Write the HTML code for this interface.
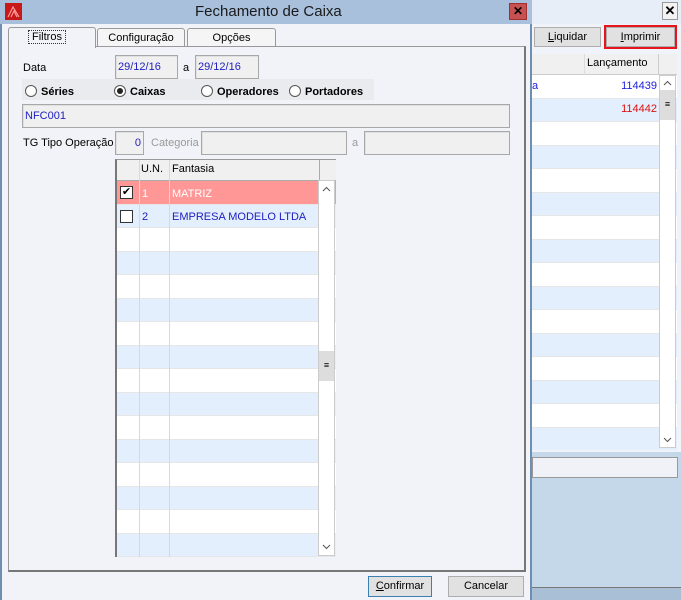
<!DOCTYPE html>
<html><head><meta charset="utf-8"><style>
*{box-sizing:border-box;margin:0;padding:0}
body{width:681px;height:600px;position:relative;overflow:hidden;font-family:"Liberation Sans",sans-serif;font-size:11px;background:#c4d8ea;color:#000}
.a{position:absolute}
.inp{position:absolute;background:#f0f0f0;border:1px solid #a8a8a8;box-shadow:inset 1px 1px 0 #e0e0e0;color:#2020c0;padding:3px 2px;font-size:11px}
.btn{position:absolute;background:#e1e1e1;border:1px solid #adadad;text-align:center;font-size:11px;line-height:18px}
.radio{display:inline-block;width:12px;height:12px;border:1px solid #555;border-radius:50%;background:#fff;vertical-align:-2px;margin-right:4px;position:relative}
.radio.on::after{content:"";position:absolute;left:2px;top:2px;width:6px;height:6px;border-radius:50%;background:#222}
.row{position:absolute;left:0;height:23.5px;border-bottom:1px solid #e6e6e6}
</style></head><body>
<!-- right window -->
<div class="a" style="left:532px;top:0;width:149px;height:24px;background:#e8eef8"></div>
<div class="a" style="left:662px;top:2px;width:16px;height:18px;background:#f3f3f3;border:1px solid #999;font-weight:bold;font-size:13px;text-align:center;line-height:16px">✕</div>
<div class="a" style="left:532px;top:24px;width:149px;height:428px;background:#f0f4fa"></div>
<div class="btn" style="left:534px;top:27px;width:67px;height:20px"><u>L</u>iquidar</div>
<div class="a" style="left:604px;top:25px;width:73px;height:24px;border:2px solid #e8141c"></div>
<div class="btn" style="left:606px;top:27px;width:69px;height:20px"><u>I</u>mprimir</div>
<div class="a" style="left:532px;top:54px;width:145px;height:396px;background:#fff;overflow:hidden">
 <div class="a" style="left:0;top:0;width:145px;height:21px;background:#f0f0f0;border-bottom:1px solid #ccc"></div>
 <div class="a" style="left:52px;top:0;width:1px;height:396px;background:#ddd"></div>
 <div class="a" style="left:55px;top:3px">Lançamento</div>
 <div class="a" style="left:126px;top:0;width:1px;height:21px;background:#ccc"></div>
 <div id="rr"></div>
</div>
<div class="a" style="left:659px;top:75px;width:17px;height:373px;background:#fff;border:1px solid #ccc">
 <svg class="a" style="left:3px;top:4px" width="9" height="6"><path d="M1 5L4.5 1.5L8 5" fill="none" stroke="#555"/></svg>
 <div class="a" style="left:0;top:14px;width:15px;height:30px;background:#ddd;text-align:center;line-height:28px;font-size:9px">≡</div>
 <svg class="a" style="left:3px;bottom:4px" width="9" height="6"><path d="M1 1L4.5 4.5L8 1" fill="none" stroke="#555"/></svg>
</div>
<div class="a" style="left:532px;top:457px;width:146px;height:21px;background:#f0f2f7;border:1px solid #999"></div>
<div class="a" style="left:532px;top:587px;width:149px;height:13px;background:#a9bfd6;border-top:1px solid #777"></div>
<!-- dialog -->
<div class="a" style="left:0;top:0;width:532px;height:600px;background:#f1f3f8;border-left:2px solid #6f8fb0;border-right:2px solid #6f8fb0"></div>
<div class="a" style="left:0;top:0;width:532px;height:24px;background:#a8c0dc"></div>
<div class="a" style="left:5px;top:3px;width:17px;height:17px;background:#c81818"><svg class="a" style="left:2px;top:2px" width="13" height="13"><path d="M1 12L6 2L12 12M4 12L7 6L10 12" fill="none" stroke="#ff9a9a" stroke-width="1.2"/></svg></div>
<div class="a" style="left:195px;top:3px;font-size:15px;color:#1a1a1a">Fechamento de Caixa</div>
<div class="a" style="left:509px;top:3px;width:18px;height:17px;background:#c75050;border:1px solid #a03030;text-align:center;font-weight:bold;font-size:12px;line-height:15px">✕</div>
<!-- tabs -->
<div class="a" style="left:8px;top:46px;width:518px;height:526px;border:1px solid #999;border-right:2px solid #777;border-bottom:2px solid #777;background:#f1f3f8"></div>
<div class="a" style="left:8px;top:27px;width:88px;height:21px;border:1px solid #999;border-bottom:none;background:#f1f3f8;border-radius:3px 3px 0 0"></div>
<div class="a" style="left:28px;top:30px;padding:0 3px;border:1px dotted #333">Filtros</div>
<div class="a" style="left:97px;top:28px;width:88px;height:19px;border:1px solid #999;background:#f5f5f5;border-radius:3px 3px 0 0;text-align:center;line-height:18px">Configuração</div>
<div class="a" style="left:187px;top:28px;width:89px;height:19px;border:1px solid #999;background:#f5f5f5;border-radius:3px 3px 0 0;text-align:center;line-height:18px">Opções</div>
<div class="a" style="left:23px;top:62px">Data</div>
<div class="inp" style="left:115px;top:55px;width:63px;height:24px;padding-top:5px">29/12/16</div>
<div class="a" style="left:183px;top:62px">a</div>
<div class="inp" style="left:195px;top:55px;width:64px;height:24px;padding-top:5px">29/12/16</div>
<div class="a" style="left:22px;top:79px;width:352px;height:21px;background:#e9ebee"></div>
<div class="a" style="left:25px;top:85px;font-weight:bold"><span class="radio"></span>Séries</div>
<div class="a" style="left:114px;top:85px;font-weight:bold"><span class="radio on"></span>Caixas</div>
<div class="a" style="left:201px;top:85px;font-weight:bold"><span class="radio"></span>Operadores</div>
<div class="a" style="left:289px;top:85px;font-weight:bold"><span class="radio"></span>Portadores</div>
<div class="inp" style="left:22px;top:104px;width:488px;height:24px;padding-top:5px">NFC001</div>
<div class="a" style="left:23px;top:137px">TG Tipo Operação</div>
<div class="inp" style="left:115px;top:131px;width:29px;height:24px;text-align:right;padding-top:5px">0</div>
<div class="a" style="left:151px;top:137px;color:#999">Categoria</div>
<div class="inp" style="left:201px;top:131px;width:146px;height:24px"></div>
<div class="a" style="left:352px;top:137px;color:#999">a</div>
<div class="inp" style="left:364px;top:131px;width:146px;height:24px"></div>
<!-- grid -->
<div class="a" style="left:115px;top:159px;width:221px;height:398px;background:#fff;border-left:2px solid #777;border-top:1px solid #999;overflow:hidden">
 <div class="a" style="left:0;top:0;width:221px;height:21px;background:#f0f0f0;border-bottom:1px solid #aaa"></div>
 <div class="a" style="left:24px;top:3px">U.N.</div><div class="a" style="left:55px;top:3px">Fantasia</div>
 <div id="lr"></div>
 <div class="a" style="left:22px;top:0;width:1px;height:398px;background:#d8d8d8"></div>
 <div class="a" style="left:52px;top:0;width:1px;height:398px;background:#d8d8d8"></div>
 <div class="a" style="left:202px;top:0;width:1px;height:21px;background:#aaa"></div>
</div>
<div class="a" style="left:318px;top:180px;width:17px;height:376px;background:#fff;border:1px solid #ccc">
 <svg class="a" style="left:3px;top:5px" width="9" height="6"><path d="M1 5L4.5 1.5L8 5" fill="none" stroke="#555"/></svg>
 <div class="a" style="left:0;top:170px;width:15px;height:30px;background:#ddd;text-align:center;line-height:28px;font-size:9px">≡</div>
 <svg class="a" style="left:3px;bottom:5px" width="9" height="6"><path d="M1 1L4.5 4.5L8 1" fill="none" stroke="#555"/></svg>
</div>
<div class="btn" style="left:368px;top:576px;width:64px;height:21px;border-color:#3c7fb1"><u>C</u>onfirmar</div>
<div class="btn" style="left:448px;top:576px;width:76px;height:21px">Cancelar</div>
<script>
var h='';for(var i=0;i<16;i++){var t=21+i*23.5,bg=i==0?'#ff9797':(i%2?'#e3effc':'#fff');h+='<div class="row" style="top:'+t+'px;width:221px;background:'+bg+'"></div>';}
h+='<div class="a" style="left:3px;top:26px;width:13px;height:13px;border:1px solid #333;background:#fff;font-size:11px;line-height:11px;text-align:center">✔</div><div class="a" style="left:25px;top:28px;color:#fff">1</div><div class="a" style="left:55px;top:28px;color:#fff">MATRIZ</div>';
h+='<div class="a" style="left:3px;top:50px;width:13px;height:13px;border:1px solid #333;background:#fff"></div><div class="a" style="left:25px;top:51px;color:#2020c0">2</div><div class="a" style="left:55px;top:51px;color:#2020c0">EMPRESA MODELO LTDA</div>';
document.getElementById('lr').innerHTML=h;
var r='';for(var i=0;i<16;i++){var t=21+i*23.5;r+='<div class="row" style="top:'+t+'px;width:145px;background:'+(i%2?'#e3effc':'#fff')+'"></div>';}
r+='<div class="a" style="left:0;top:26px;color:#2020e0">a</div><div class="a" style="right:20px;top:26px;color:#2020e0">114439</div><div class="a" style="right:20px;top:49px;color:#e01010">114442</div>';
document.getElementById('rr').innerHTML=r;
</script>
</body></html>
